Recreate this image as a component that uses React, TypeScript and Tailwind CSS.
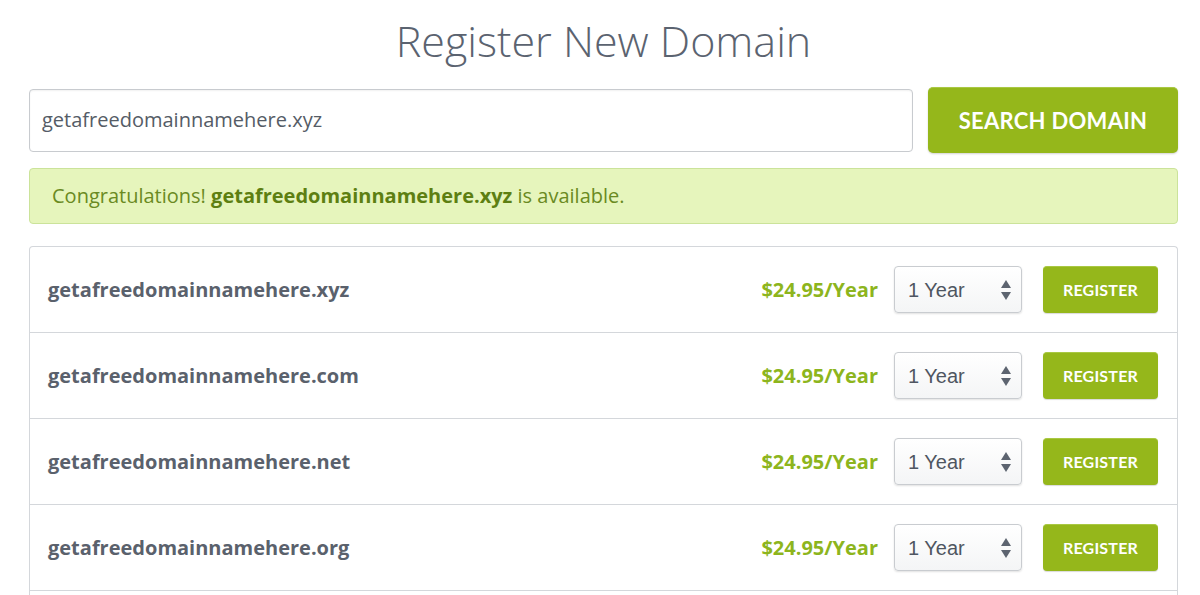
import React from 'react';

const domains = [
  'getafreedomainnamehere.xyz',
  'getafreedomainnamehere.com',
  'getafreedomainnamehere.net',
  'getafreedomainnamehere.org',
];

function YearSelect() {
  return (
    <div className="relative w-[128px] h-[47px] rounded-[4px] border border-[#c9ccd0] bg-gradient-to-b from-white to-[#f4f5f6] shadow-[0_1px_2px_rgba(0,0,0,0.12)] flex items-center pl-[13px] font-['Liberation_Sans',Arial,sans-serif] text-[20px] text-[#4f5661]">
      1 Year
      {/* stepper arrows */}
      <svg className="absolute right-[10px] top-1/2 -translate-y-1/2" width="10" height="22" viewBox="0 0 10 22">
        <path d="M5 1 L10 9 L0 9 Z" fill="#5d6470" />
        <path d="M5 21 L10 13 L0 13 Z" fill="#5d6470" />
      </svg>
    </div>
  );
}

function DomainRow({ name }: { name: string }) {
  return (
    <div className="h-[86px] border-b border-[#d4d7db] flex items-center pl-[18px] pr-[19px]">
      <span className="flex-1 font-['Open_Sans',sans-serif] font-bold text-[20px] text-[#5a616c]">{name}</span>
      <span className="font-['Open_Sans',sans-serif] font-bold text-[20px] text-[#8db51d] mr-[16px]">$24.95/Year</span>
      <YearSelect />
      <button className="ml-[21px] w-[115px] h-[47px] rounded-[4px] bg-[#95b71b] border-t border-[#a9c843] shadow-[0_1px_1px_rgba(0,0,0,0.15)] text-white font-['Lato',sans-serif] font-bold text-[16px] tracking-[0.2px]">
        REGISTER
      </button>
    </div>
  );
}

export default function App() {
  return (
    <div className="w-[1200px] h-[595px] overflow-hidden bg-white pl-[29px] pr-[22px]">
      <h1 className="text-center font-['Open_Sans',sans-serif] font-light text-[43px] leading-none text-[#5b6370] pt-[19px]">
        Register New Domain
      </h1>

      <div className="mt-[25px] flex items-center gap-[15px]">
        <div className="flex-1 h-[63px] rounded-[4px] border border-[#c8cbcf] shadow-[inset_0_1px_2px_rgba(0,0,0,0.06)] flex items-center pl-[12px] font-['Open_Sans',sans-serif] text-[20px] text-[#555c66]">
          getafreedomainnamehere.xyz
        </div>
        <button className="w-[250px] h-[66px] rounded-[5px] bg-[#95b71b] border-t border-[#a9c843] shadow-[0_1px_2px_rgba(0,0,0,0.18)] text-white font-['Lato',sans-serif] font-bold text-[22px] tracking-[0.3px]">
          SEARCH DOMAIN
        </button>
      </div>

      <div className="mt-[15px] h-[56px] rounded-[4px] border border-[#cbe39a] bg-[#e6f5bc] flex items-center pl-[22px] font-['Open_Sans',sans-serif] text-[20px] text-[#6a8a22]">
        Congratulations!&nbsp;<b className="font-bold text-[#5d7f12]">getafreedomainnamehere.xyz</b>&nbsp;is available.
      </div>

      <div className="mt-[22px] rounded-t-[4px] border-x border-t border-[#d4d7db]">
        {domains.map((d) => (
          <DomainRow key={d} name={d} />
        ))}
        <div className="h-[40px]" />
      </div>
    </div>
  );
}
